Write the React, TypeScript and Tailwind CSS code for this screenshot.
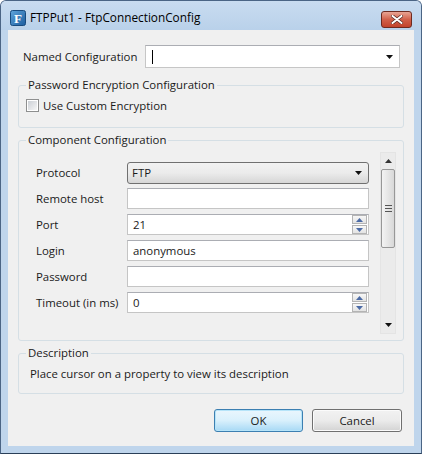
import React from "react";

const ui = "font-['Open_Sans','Noto_Sans',sans-serif] text-[11.4px] text-[#1a1a1a]";

const Group = (props: { title: string; className?: string; children?: React.ReactNode }) => (
  <div className={`relative rounded-[3px] border border-[#d5dfe5] ${props.className ?? ""}`}>
    <span className="absolute -top-[9px] left-[7px] bg-[#f0f0f0] px-[2px] leading-[16px]">{props.title}</span>
    {props.children}
  </div>
);

const Arrow = () => (
  <svg width="7" height="4" viewBox="0 0 7 4">
    <path d="M0 0h7L3.5 4z" fill="#111" />
  </svg>
);

const Spinner = () => (
  <div className="flex flex-col gap-[1px] pr-[1px]">
    <div className="flex h-[9px] w-[15px] items-center justify-center border border-[#b4b4b4] bg-gradient-to-b from-[#f7f7f7] to-[#e3e3e3]">
      <svg width="7" height="4" viewBox="0 0 7 4">
        <path d="M3.5 0L7 4H0z" fill="#4b6aa5" />
      </svg>
    </div>
    <div className="flex h-[9px] w-[15px] items-center justify-center border border-[#b4b4b4] bg-gradient-to-b from-[#f7f7f7] to-[#e3e3e3]">
      <svg width="7" height="4" viewBox="0 0 7 4">
        <path d="M0 0h7L3.5 4z" fill="#4b6aa5" />
      </svg>
    </div>
  </div>
);

const TextField = (props: { value?: string; spin?: boolean }) => (
  <div className="flex h-[21px] w-[242px] items-center border border-[#c5c5c5] border-t-[#abadb3] bg-white pl-[5px]">
    <span className="flex-1">{props.value}</span>
    {props.spin && <Spinner />}
  </div>
);

const rows: { label: string; value?: string; spin?: boolean }[] = [
  { label: "Remote host" },
  { label: "Port", value: "21", spin: true },
  { label: "Login", value: "anonymous" },
  { label: "Password" },
  { label: "Timeout (in ms)", value: "0", spin: true },
];

export default function App() {
  return (
    <div className={`flex h-[454px] w-[422px] flex-col overflow-hidden rounded-t-[6px] border border-[#4b6585] border-b-[#2a3f58] bg-[#bfd5ec] ${ui}`}>
      {/* title bar */}
      <div className="flex h-[29px] shrink-0 items-center bg-gradient-to-b from-[#c9dcf0] to-[#b9d1ea] pl-[9px] pr-[9px]">
        <svg width="16" height="16" viewBox="0 0 16 16" className="mt-[4px]">
          <defs>
            <linearGradient id="ic" x1="0" y1="0" x2="1" y2="1">
              <stop offset="0" stopColor="#5fa5dc" />
              <stop offset="1" stopColor="#1b5c9e" />
            </linearGradient>
          </defs>
          <rect x="0.5" y="0.5" width="15" height="15" rx="2" fill="url(#ic)" stroke="#174a7e" />
          <text x="8" y="13" textAnchor="middle" fontFamily="'Liberation Serif',serif" fontWeight="bold" fontSize="13" fill="#fff">F</text>
        </svg>
        <span className="ml-[4px] mt-[4px] text-[11.8px] text-black">FTPPut1 - FtpConnectionConfig</span>
        <div className="ml-auto mt-[7px] flex h-[17px] w-[31px] items-center justify-center rounded-[3px] border border-[#6e2a20] bg-gradient-to-b from-[#e8a494] via-[#d1604a] to-[#c2432c]">
          <svg width="12" height="9" viewBox="0 0 12 9">
            <path d="M1.5 1l9 7M10.5 1l-9 7" stroke="#5a2a24" strokeWidth="3.4" strokeLinecap="round" />
            <path d="M1.5 1l9 7M10.5 1l-9 7" stroke="#fff" strokeWidth="2" strokeLinecap="round" />
          </svg>
        </div>
      </div>

      {/* client area */}
      <div className="mx-[7px] flex h-[416px] flex-col bg-[#f0f0f0] px-[10px] pt-[15px]">
        <div className="flex h-[23px] items-center">
          <span className="ml-[5px]">Named Configuration</span>
          <div className="ml-auto mr-[4px] flex h-[23px] w-[255px] items-center border border-[#c6c6c6] border-t-[#abadb3] bg-white pl-[6px] pr-[6px]">
            <span className="h-[14px] w-[1px] bg-black" />
            <span className="ml-auto">
              <Arrow />
            </span>
          </div>
        </div>

        <Group title="Password Encryption Configuration" className="mt-[17px] h-[43px] pl-[7px] pt-[13px]">
          <label className="flex items-center gap-[4px]">
            <span className="flex h-[13px] w-[13px] items-center justify-center border border-[#8e8f8f] bg-white">
              <span className="h-[9px] w-[9px] bg-gradient-to-br from-[#cbcfd5] to-[#f6f6f6]" />
            </span>
            <span className="leading-[13px]">Use Custom Encryption</span>
          </label>
        </Group>

        <Group title="Component Configuration" className="mt-[12px] flex h-[201px]">
          <div className="flex flex-col gap-[4px] pl-[17px] pt-[21px]">
            <div className="flex items-center">
              <span className="w-[91px]">Protocol</span>
              <div className="flex h-[22px] w-[242px] items-center rounded-[3px] border border-[#707070] bg-gradient-to-b from-[#f2f2f2] via-[#ebebeb] to-[#d6d6d6] pl-[4px] pr-[6px]">
                <span>FTP</span>
                <span className="ml-auto">
                  <Arrow />
                </span>
              </div>
            </div>
            <div className="flex flex-col gap-[5px]">
              {rows.map((r) => (
                <div key={r.label} className="flex items-center">
                  <span className="w-[91px]">{r.label}</span>
                  <TextField value={r.value} spin={r.spin} />
                </div>
              ))}
            </div>
          </div>
          {/* scrollbar */}
          <div className="ml-[11px] mt-[11px] flex h-[182px] w-[16px] flex-col items-center border border-[#e4e4e4] bg-[#ebebeb]">
            <div className="flex h-[16px] items-center">
              <svg width="7" height="4" viewBox="0 0 7 4">
                <path d="M3.5 0L7 4H0z" fill="#333" />
              </svg>
            </div>
            <div className="flex h-[79px] w-[14px] flex-col items-center justify-center gap-[2px] rounded-[2px] border border-[#979797] bg-gradient-to-r from-[#f3f3f3] via-[#e6e6e6] to-[#d8d8d8]">
              <span className="h-[1px] w-[7px] bg-[#555]" />
              <span className="h-[1px] w-[7px] bg-[#555]" />
              <span className="h-[1px] w-[7px] bg-[#555]" />
            </div>
            <div className="mt-auto flex h-[16px] items-center">
              <Arrow />
            </div>
          </div>
        </Group>

        <Group title="Description" className="mt-[12px] flex h-[41px] items-center pl-[11px] pt-[1px]">
          <span>Place cursor on a property to view its description</span>
        </Group>

        <div className="mt-[15px] flex justify-end gap-[9px] pr-[2px]">
          <button className="h-[23px] w-[89px] rounded-[3px] border border-[#3c7fb1] bg-gradient-to-b from-[#eaf6fd] via-[#d9f0fc] to-[#a7d9f5] text-[#1a1a1a] shadow-[inset_0_0_0_1px_#b6e4f9]">
            OK
          </button>
          <button className="h-[23px] w-[90px] rounded-[3px] border border-[#707070] bg-gradient-to-b from-[#f2f2f2] via-[#ebebeb] to-[#d3d3d3] text-[#1a1a1a] shadow-[inset_0_0_0_1px_#fbfbfb]">
            Cancel
          </button>
        </div>
      </div>
    </div>
  );
}
